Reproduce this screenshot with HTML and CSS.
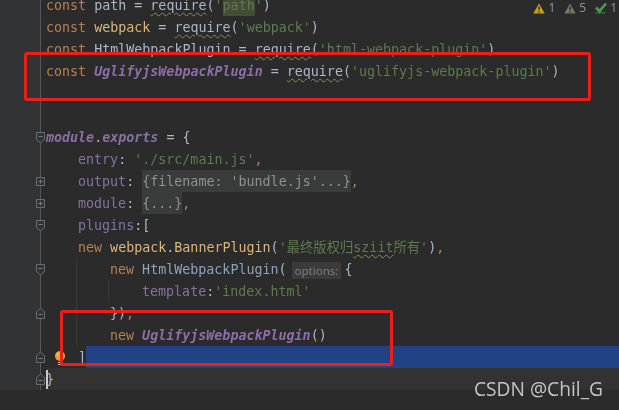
FILE: index.html
```html
<!DOCTYPE html>
<html lang="zh">
<head>
<meta charset="utf-8">
<title>webpack.config.js</title>
<link rel="stylesheet" href="styles.css">
</head>
<body>
<svg class="defs" width="0" height="0" aria-hidden="true">
  <symbol id="fold-start" viewBox="0 0 11 13"><path d="M1.5 1.5h8v7l-4 3.5-4-3.5z" fill="#313335" stroke="#6a6c6e"/><path d="M3.5 5.5h4" stroke="#7a7c7e"/></symbol>
  <symbol id="fold-end" viewBox="0 0 11 13"><path d="M1.5 11.5h8v-7l-4-3.5-4 3.5z" fill="#313335" stroke="#6a6c6e"/><path d="M3.5 7.5h4" stroke="#7a7c7e"/></symbol>
  <symbol id="fold-plus" viewBox="0 0 11 13"><path d="M1.5 2.5h8v8h-8z" fill="#313335" stroke="#6a6c6e"/><path d="M3.5 6.5h4M5.5 4.5v4" stroke="#7a7c7e"/></symbol>
</svg>
<main class="editor">
  <div class="lines">
    <div class="row"><div class="gutter"></div><div class="code"><span class="kw">const </span><span class="id">path</span> = <span class="sq">require</span>(<span class="str">'<span class="hl">path</span>'</span>)</div></div>
    <div class="row"><div class="gutter"></div><div class="code"><span class="kw">const </span><span class="fn">webpack</span> = <span class="sq">require</span>(<span class="str">'webpack'</span>)</div></div>
    <div class="row"><div class="gutter"></div><div class="code"><span class="kw">const </span>HtmlWebpackPlugin = <span class="sq">require</span>(<span class="str">'html-webpack-plugin'</span>)</div></div>
    <div class="row"><div class="gutter"></div><div class="code"><span class="kw">const </span><span class="cls">UglifyjsWebpackPlugin</span> = <span class="sq">require</span>(<span class="str">'uglifyjs-webpack-plugin'</span>)</div></div>
    <div class="row"><div class="gutter"></div><div class="code"></div></div>
    <div class="row"><div class="gutter"></div><div class="code"></div></div>
    <div class="row"><div class="gutter"><svg class="fold"><use href="#fold-start"/></svg></div><div class="code"><span class="mod">module</span>.<span class="mod">exports</span> = {</div></div>
    <div class="row"><div class="gutter"></div><div class="code i1"><span class="prop">entry</span>: <span class="str">'./src/main.js'</span><span class="kw">,</span></div></div>
    <div class="row"><div class="gutter"><svg class="fold"><use href="#fold-plus"/></svg></div><div class="code i1"><span class="prop">output</span>: <span class="folded">{filename: 'bundle.js'...}</span><span class="kw">,</span></div></div>
    <div class="row"><div class="gutter"><svg class="fold"><use href="#fold-plus"/></svg></div><div class="code i1"><span class="prop">module</span>: <span class="folded">{...}</span><span class="kw">,</span></div></div>
    <div class="row"><div class="gutter"><svg class="fold"><use href="#fold-start"/></svg></div><div class="code i1"><span class="prop">plugins</span>:[</div></div>
    <div class="row"><div class="gutter"></div><div class="code i1"><span class="kw">new </span><span class="fn">webpack</span>.<span class="fn">BannerPlugin</span>(<span class="str">'最终版权归<span class="sq-str">sziit</span>所有'</span>)<span class="kw">,</span></div></div>
    <div class="row"><div class="gutter"><svg class="fold"><use href="#fold-start"/></svg></div><div class="code i2"><span class="kw">new </span><span class="type">HtmlWebpackPlugin</span>(<span class="hint">options:</span>{</div></div>
    <div class="row"><div class="gutter"></div><div class="code i3"><span class="prop">template</span>:<span class="str">'index.html'</span></div></div>
    <div class="row"><div class="gutter"><svg class="fold"><use href="#fold-end"/></svg></div><div class="code i2">})<span class="kw">,</span></div></div>
    <div class="row"><div class="gutter"></div><div class="code i2"><span class="kw">new </span><span class="cls">UglifyjsWebpackPlugin</span>()</div></div>
    <div class="row"><div class="gutter"><svg class="fold"><use href="#fold-end"/></svg></div><div class="code i1">]<span class="sel"></span></div>
      <svg class="bulb" width="12" height="16" viewBox="0 0 12 16"><circle cx="6" cy="6" r="5" fill="#f0a020"/><path d="M3 6a3 3 0 0 1 3-3" stroke="#f8c860" fill="none"/><path d="M4 12.5h4M4 14.5h4" stroke="#c8c8b0"/></svg>
    </div>
    <div class="row"><div class="gutter"><svg class="fold"><use href="#fold-end"/></svg></div><div class="code current"><span class="caret"></span>}</div></div>
  </div>

  <div class="guide guide-a"></div>
  <div class="guide guide-b"></div>

  <div class="inspect">
    <svg width="12" height="11" viewBox="0 0 12 11"><path d="M6 0.5L11.7 10.5H0.3z" fill="#c9a01c"/><path d="M6 3.5v3.5M6 8v1.5" stroke="#2b2b2b" stroke-width="1.4"/></svg><span class="count">1</span>
    <svg class="gap" width="12" height="11" viewBox="0 0 12 11"><path d="M6 0.5L11.7 10.5H0.3z" fill="#7b7663"/><path d="M6 3.5v3.5M6 8v1.5" stroke="#2b2b2b" stroke-width="1.4"/></svg><span class="count">5</span>
    <svg class="gap" width="12" height="13" viewBox="0 0 12 13"><path d="M1 5.5l3.5 3.5L11 1.5" fill="none" stroke="#4f9a52" stroke-width="2.6"/><path d="M0.5 11.5l2-1.5 2 1.5 2-1.5 2 1.5 2-1.5" fill="none" stroke="#4f9a52"/></svg><span class="count">1</span>
  </div>

  <div class="mark mark-a"></div>
  <div class="mark mark-b"></div>
  <div class="watermark">CSDN @Chil_G</div>
</main>
</body>
</html>
```

FILE: styles.css
```css
html, body {
  margin: 0;
  padding: 0;
  height: 100%;
}

body {
  background: #2b2b2b;
  overflow: hidden;
}

.defs {
  position: absolute;
}

.editor {
  position: relative;
  width: 619px;
  height: 410px;
  overflow: hidden;
  background: #2b2b2b;
  font-family: "DejaVu Sans Mono", "Noto Sans CJK SC", monospace;
  font-size: 13.33px;
  color: #a9b7c6;
}

.lines {
  display: flex;
  flex-direction: column;
  margin-top: -6px;
  filter: blur(0.3px);
}

.row {
  position: relative;
  display: flex;
  height: 22px;
}

.gutter {
  box-sizing: border-box;
  flex: none;
  display: flex;
  align-items: center;
  justify-content: flex-end;
  width: 41px;
  background: #313335;
  border-right: 1px solid #55585a;
}

.fold {
  flex: none;
  width: 11px;
  height: 13px;
  margin-right: -6px;
}

.code {
  flex: 1;
  display: flex;
  align-items: center;
  box-sizing: border-box;
  margin-left: 5px;
  padding-top: 2px;
  line-height: 20px;
  white-space: pre;
}

.i1 { padding-left: 32px; }
.i2 { padding-left: 64px; }
.i3 { padding-left: 96px; }

.current {
  background: #323232;
}

.caret {
  flex: none;
  width: 2px;
  height: 19px;
  margin: -2px -2px 0 0;
  background: #c8ccd0;
}

.sel {
  flex: 1;
  align-self: stretch;
  margin-top: -2px;
  background: #214283;
}

.kw { color: #b5804f; }
.id { color: #a9b7c6; }
.fn { color: #dcb67a; }
.str { color: #5f7a50; }
.prop { color: #8672a0; }
.type { color: #8fa3b8; }
.cls { color: #8b6fa5; font-style: italic; font-weight: bold; }
.mod { color: #8b6fa5; font-style: italic; font-weight: bold; }

.sq, .sq-str {
  text-decoration: underline wavy #8c8a5c 1px;
  text-underline-offset: 2px;
}

.hl {
  display: inline-block;
  background: #444d36;
  box-shadow: 0 -2px 0 #444d36;
  color: #5f7a50;
}

.folded {
  background: #3a3b3b;
  box-shadow: 0 -2px 0 #3a3b3b;
  color: #8f9092;
}

.hint {
  padding: 0 3px;
  margin: 0 3px 0 5px;
  background: #3b3b3b;
  color: #7c7e80;
  font-family: "Noto Sans", sans-serif;
  font-size: 11.5px;
  line-height: 17px;
}

.bulb {
  position: absolute;
  left: 54px;
  top: 4px;
}

.guide {
  position: absolute;
  width: 1px;
  background: #3a3a3a;
}

.guide-a { left: 76px; top: 258px; height: 88px; }
.guide-b { left: 108px; top: 280px; height: 22px; }

.inspect {
  position: absolute;
  top: 1px;
  right: 2px;
  display: flex;
  align-items: center;
  font-family: "Noto Sans", sans-serif;
  font-size: 12px;
  line-height: 14px;
  color: #8f9091;
}

.inspect .gap {
  margin-left: 9px;
}

.count {
  margin-left: 3px;
}

.mark {
  position: absolute;
  box-sizing: border-box;
  border: 3px solid #e8211d;
  border-radius: 3px;
}

.mark-a { left: 24px; top: 52px; width: 567px; height: 49px; }
.mark-b { left: 60px; top: 310px; width: 333px; height: 56px; }

.watermark {
  position: absolute;
  right: 16px;
  top: 376px;
  font-family: "Open Sans", sans-serif;
  font-size: 19.2px;
  line-height: 26px;
  color: #c4c4c4;
}
```
